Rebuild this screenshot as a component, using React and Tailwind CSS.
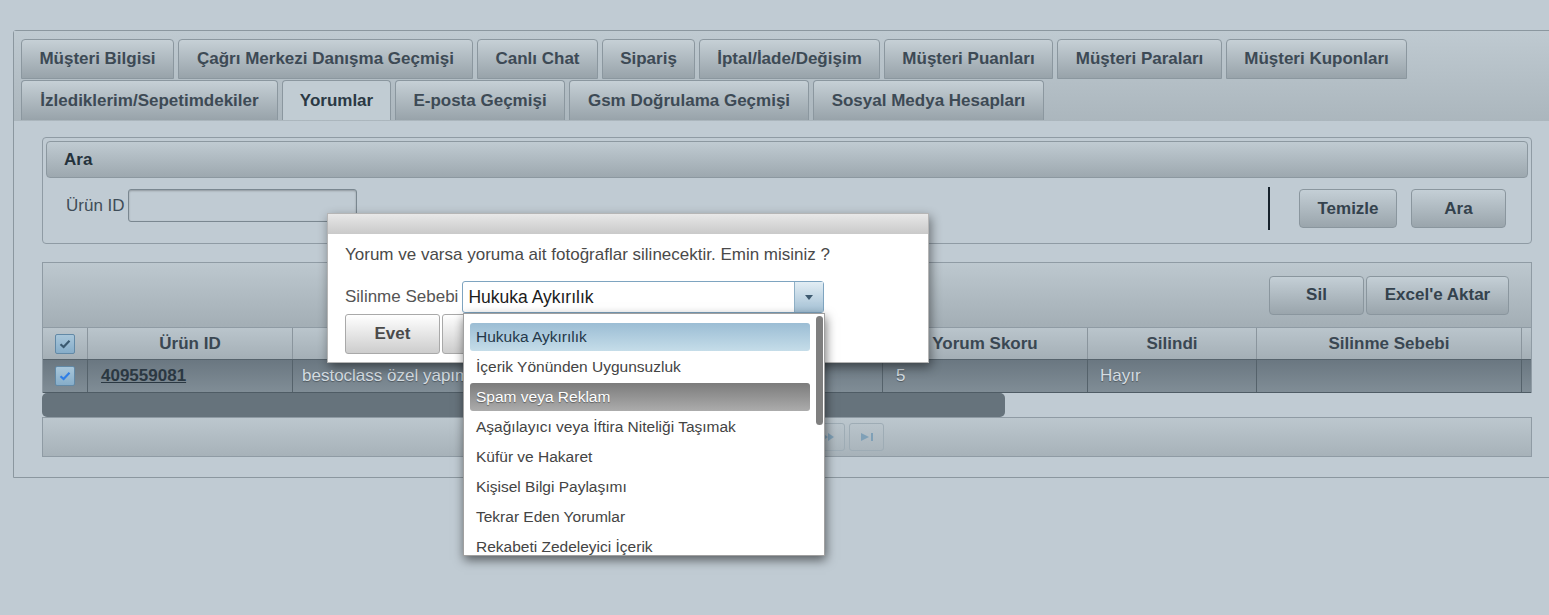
const topTabs = [
  { label: "Müşteri Bilgisi", w: "w-[153px]" },
  { label: "Çağrı Merkezi Danışma Geçmişi", w: "w-[295px]" },
  { label: "Canlı Chat", w: "w-[121px]" },
  { label: "Sipariş", w: "w-[93px]" },
  { label: "İptal/İade/Değişim", w: "w-[181px]" },
  { label: "Müşteri Puanları", w: "w-[169px]" },
  { label: "Müşteri Paraları", w: "w-[165px]" },
  { label: "Müşteri Kuponları", w: "w-[181px]" },
];

const bottomTabs = [
  { label: "İzlediklerim/Sepetimdekiler", w: "w-[257px]" },
  { label: "Yorumlar", w: "w-[109px]", active: true },
  { label: "E-posta Geçmişi", w: "w-[170px]" },
  { label: "Gsm Doğrulama Geçmişi", w: "w-[240px]" },
  { label: "Sosyal Medya Hesapları", w: "w-[231px]" },
];

const reasons = [
  "Hukuka Aykırılık",
  "İçerik Yönünden Uygunsuzluk",
  "Spam veya Reklam",
  "Aşağılayıcı veya İftira Niteliği Taşımak",
  "Küfür ve Hakaret",
  "Kişisel Bilgi Paylaşımı",
  "Tekrar Eden Yorumlar",
  "Rekabeti Zedeleyici İçerik",
];

function Tab({ label, w, active, last }) {
  if (active) {
    return (
      <div className={`${w} h-[40px] flex items-center justify-center rounded-t-[4px] border border-b-0 border-[#8b979f] bg-[#c1ccd3] text-[17px] font-bold text-[#2b3944]`}>
        {label}
      </div>
    );
  }
  return (
    <div
      className={`${w} h-[40px] flex items-center justify-center rounded-t-[4px] border border-[#8b979f] bg-linear-to-b from-[#c6d0d6] to-[#98a3aa] text-[17px] font-bold text-[#3d4a55] ${last ? "border-b-0" : ""}`}
    >
      {label}
    </div>
  );
}

function Btn({ children, className }) {
  return (
    <button className={`h-[39px] rounded-[4px] border border-[#8a969e] bg-linear-to-b from-[#c4cfd6] to-[#9aa5ac] text-[17px] font-bold text-[#34424d] ${className}`}>
      {children}
    </button>
  );
}

function Check({ color }) {
  return (
    <div className="w-[20px] h-[20px] rounded-[2px] border border-[#6289a6] bg-linear-to-b from-[#a8c6da] to-[#86adc9] flex items-center justify-center">
      <svg width="12" height="10" viewBox="0 0 12 10">
        <path d="M1.5 5.2 L4.6 8 L10.5 1.8" fill="none" stroke={color} strokeWidth="2.2" />
      </svg>
    </div>
  );
}

function PagerBtn({ children }) {
  return (
    <div className="w-[35px] h-[28px] rounded-[3px] border border-[#9eacb5] flex items-center justify-center">
      {children}
    </div>
  );
}

export default function App() {
  return (
    <div className="relative w-[1549px] h-[615px] overflow-hidden bg-[#c0cbd3] pt-[30px] pl-[13px] font-['Liberation_Sans',Arial,sans-serif]">
      {/* main tab panel */}
      <div className="w-[1560px] h-[448px] border border-[#8b979f] rounded-tl-[3px]">
        <div className="h-[90px] bg-linear-to-b from-[#bfcad1] to-[#abb6bd] pl-[7px] pt-[8px]">
          <div className="flex gap-[4px] mb-[1px]">
            {topTabs.map((t) => (
              <Tab key={t.label} {...t} />
            ))}
          </div>
          <div className="flex gap-[4px]">
            {bottomTabs.map((t) => (
              <Tab key={t.label} {...t} last />
            ))}
          </div>
        </div>

        <div className="pl-[28px]">
          {/* search box */}
          <div className="mt-[16px] w-[1490px] h-[107px] rounded-[4px] border border-[#8f9ba4] p-[3px]">
            <div className="h-[37px] rounded-[4px] border border-[#8c98a0] bg-linear-to-b from-[#c0cbd2] to-[#9da8af] pl-[17px] flex items-center text-[17px] font-bold text-[#25323c]">
              Ara
            </div>
            <div className="mt-[9px] h-[43px] flex items-start pl-[20px] pr-[22px]">
              <div className="mt-[2px] h-[33px] flex items-center gap-[3px]">
                <span className="text-[17px] text-[#3f4d58]">Ürün ID</span>
                <div className="w-[229px] h-[33px] rounded-[3px] border border-[#7a8790] shadow-[inset_0_1px_2px_rgba(0,0,0,0.25)]" />
              </div>
              <div className="ml-auto flex items-start">
                <div className="w-[2px] h-[43px] bg-[#16222b]" />
                <Btn className="ml-[29px] mt-[2px] w-[98px]">Temizle</Btn>
                <Btn className="ml-[14px] mt-[2px] w-[95px]">Ara</Btn>
              </div>
            </div>
          </div>

          {/* comments grid */}
          <div className="mt-[18px] w-[1490px]">
            <div className="border-x border-t border-[#8f9ba4] overflow-hidden">
              <div className="h-[64px] bg-linear-to-b from-[#bdc8cf] to-[#a3aeb5] flex items-center justify-end pr-[22px] gap-[2px]">
                <Btn className="w-[95px]">Sil</Btn>
                <Btn className="w-[143px]">Excel'e Aktar</Btn>
              </div>
              <div className="h-[33px] flex border-t border-[#8f9ba4] border-b border-b-[#56636c] bg-linear-to-b from-[#bac5cc] to-[#a4afb6] text-[17px] font-bold text-[#3a4752] whitespace-nowrap">
                <div className="w-[45px] shrink-0 border-r border-[#8a959d] flex items-center justify-center">
                  <Check color="#3b5a70" />
                </div>
                <div className="w-[205px] shrink-0 border-r border-[#8a959d] flex items-center justify-center">Ürün ID</div>
                <div className="w-[590px] shrink-0 border-r border-[#8a959d] flex items-center justify-center">Yorum</div>
                <div className="w-[205px] shrink-0 border-r border-[#8a959d] flex items-center justify-center">Yorum Skoru</div>
                <div className="w-[169px] shrink-0 border-r border-[#8a959d] flex items-center justify-center">Silindi</div>
                <div className="w-[265px] shrink-0 border-r border-[#8a959d] flex items-center justify-center">Silinme Sebebi</div>
                <div className="w-[120px] shrink-0" />
              </div>
              <div className="h-[33px] flex border-b border-[#4f5c65] bg-linear-to-b from-[#6a7781] to-[#808d96] text-[17px] text-[#d4dce1] whitespace-nowrap [text-shadow:0_1px_1px_rgba(0,0,0,0.35)]">
                <div className="w-[45px] shrink-0 border-r border-[#55626b] flex items-center justify-center">
                  <Check color="#2f7ee6" />
                </div>
                <div className="w-[205px] shrink-0 border-r border-[#55626b] flex items-center pl-[13px]">
                  <span className="font-bold underline text-[#2b3842] [text-shadow:none]">409559081</span>
                </div>
                <div className="w-[590px] shrink-0 border-r border-[#55626b] flex items-center pl-[9px] overflow-hidden">
                  bestoclass özel yapım ürün, çok beğendim
                </div>
                <div className="w-[205px] shrink-0 border-r border-[#55626b] flex items-center pl-[13px]">5</div>
                <div className="w-[169px] shrink-0 border-r border-[#55626b] flex items-center pl-[12px]">Hayır</div>
                <div className="w-[265px] shrink-0 border-r border-[#55626b]" />
                <div className="w-[120px] shrink-0" />
              </div>
            </div>
            <div className="h-[24px]">
              <div className="w-[963px] h-full rounded-[5px] bg-[#66737c]" />
            </div>
            <div className="h-[40px] border border-[#8f9ba4] bg-linear-to-b from-[#bcc7ce] to-[#a7b2b9] flex items-center gap-[4px] pl-[650px]">
              <PagerBtn>
                <svg width="12" height="8" viewBox="0 0 12 8" fill="#7fa0b7">
                  <rect x="0" y="0" width="2" height="8" />
                  <path d="M11 0 L11 8 L3 4 Z" />
                </svg>
              </PagerBtn>
              <PagerBtn>
                <svg width="12" height="8" viewBox="0 0 12 8" fill="#7fa0b7">
                  <path d="M6 0 L6 8 L0 4 Z M12 0 L12 8 L6 4 Z" />
                </svg>
              </PagerBtn>
              <PagerBtn>
                <span className="text-[13px] text-[#4b5964]">1</span>
              </PagerBtn>
              <PagerBtn>
                <svg width="12" height="8" viewBox="0 0 12 8" fill="#7fa0b7">
                  <path d="M0 0 L6 4 L0 8 Z M6 0 L12 4 L6 8 Z" />
                </svg>
              </PagerBtn>
              <PagerBtn>
                <svg width="12" height="8" viewBox="0 0 12 8" fill="#7fa0b7">
                  <path d="M0 0 L8 4 L0 8 Z" />
                  <rect x="10" y="0" width="2" height="8" />
                </svg>
              </PagerBtn>
            </div>
          </div>
        </div>
      </div>

      {/* delete confirmation dialog */}
      <div className="absolute left-[327px] top-[213px] w-[602px] h-[150px] bg-white border border-[#b5b5b5] shadow-[2px_4px_10px_rgba(0,0,0,0.45)]">
        <div className="h-[20px] bg-linear-to-b from-[#e8e8e8] to-[#c9c9c9]" />
        <div className="pl-[17px] pt-[11px]">
          <p className="text-[17px] leading-[20px] text-[#4a4a4a]">
            Yorum ve varsa yoruma ait fotoğraflar silinecektir. Emin misiniz ?
          </p>
          <div className="mt-[16px] flex items-center gap-[4px]">
            <span className="text-[17px] text-[#555]">Silinme Sebebi</span>
            <div className="w-[362px] h-[32px] rounded-[3px] border border-[#7ea4c0] flex items-center">
              <span className="flex-1 pl-[5px] text-[17.5px] text-[#1c1c1c]">Hukuka Aykırılık</span>
              <div className="w-[29px] h-full border-l border-[#8fb0c6] bg-linear-to-b from-[#e2edf4] to-[#a4c1d5] flex items-center justify-center">
                <svg width="8" height="5" viewBox="0 0 8 5" fill="#3e5a70">
                  <path d="M0 0 L8 0 L4 5 Z" />
                </svg>
              </div>
            </div>
          </div>
          <div className="mt-[1px] flex gap-[2px]">
            <button className="w-[95px] h-[40px] rounded-[3px] border border-[#a9a9a9] bg-linear-to-b from-[#ffffff] to-[#cdcdcd] text-[17px] font-bold text-[#4a4a4a]">
              Evet
            </button>
            <button className="w-[95px] h-[40px] rounded-[3px] border border-[#a9a9a9] bg-linear-to-b from-[#ffffff] to-[#cdcdcd] text-[17px] font-bold text-[#4a4a4a]">
              Hayır
            </button>
          </div>
        </div>
      </div>

      {/* open reason list */}
      <div className="absolute left-[463px] top-[313px] w-[362px] h-[243px] overflow-hidden bg-white border border-[#a0a0a0] shadow-[1px_4px_10px_rgba(0,0,0,0.55)]">
        <div className="pt-[9px] pl-[6px] pr-[14px]">
          {reasons.map((r, i) => {
            let cls = "text-[#444]";
            if (i === 0) cls = "bg-linear-to-b from-[#9bbdd4] to-[#c5dde9] text-[#24384a]";
            if (i === 2) cls = "bg-linear-to-b from-[#7c7c7c] to-[#acacac] text-white [text-shadow:0_1px_1px_rgba(0,0,0,0.4)]";
            return (
              <div key={r} className={`h-[28px] mb-[2px] rounded-[3px] pl-[6px] flex items-center text-[15.5px] whitespace-nowrap ${cls}`}>
                {r}
              </div>
            );
          })}
        </div>
        <div className="absolute right-[1px] top-[2px] w-[7px] h-[109px] rounded-full bg-[#7f7f7f]" />
      </div>
    </div>
  );
}
